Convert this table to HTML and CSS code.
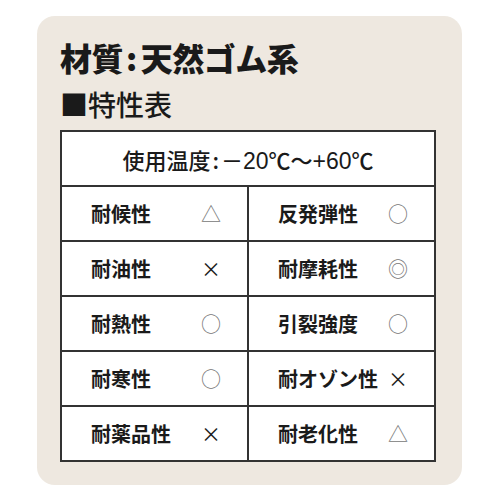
FILE: index.html
```html
<!DOCTYPE html>
<html lang="ja">
<head>
<meta charset="utf-8">
<link rel="stylesheet" href="styles.css">
</head>
<body>
<div class="card">
  <h1 class="title">材質<span class="colon">:</span>天然ゴム系</h1>
  <h2 class="subtitle">■特性表</h2>
  <table class="spec">
    <tr><th colspan="2" class="head">使用温度<span class="hcolon">:</span>－<span class="num">20</span>℃〜<span class="num">+60</span>℃</th></tr>
    <tr>
      <td><div class="cell"><span class="label">耐候性</span><span class="mark">△</span></div></td>
      <td><div class="cell"><span class="label">反発弾性</span><span class="mark">○</span></div></td>
    </tr>
    <tr>
      <td><div class="cell"><span class="label">耐油性</span><span class="mark x">×</span></div></td>
      <td><div class="cell"><span class="label">耐摩耗性</span><span class="mark">◎</span></div></td>
    </tr>
    <tr>
      <td><div class="cell"><span class="label">耐熱性</span><span class="mark">○</span></div></td>
      <td><div class="cell"><span class="label">引裂強度</span><span class="mark">○</span></div></td>
    </tr>
    <tr>
      <td><div class="cell"><span class="label">耐寒性</span><span class="mark">○</span></div></td>
      <td><div class="cell"><span class="label">耐オゾン性</span><span class="mark x">×</span></div></td>
    </tr>
    <tr>
      <td><div class="cell"><span class="label">耐薬品性</span><span class="mark x">×</span></div></td>
      <td><div class="cell"><span class="label">耐老化性</span><span class="mark">△</span></div></td>
    </tr>
  </table>
</div>
</body>
</html>
```
FILE: styles.css
```css
html, body {
  margin: 0;
  padding: 0;
  background: #ffffff;
}
body {
  font-family: "Noto Sans CJK JP", "Noto Sans", sans-serif;
  color: #1a1a1a;
}
.card {
  margin: 16px 0 0 37px;
  width: 425px;
  height: 469px;
  box-sizing: border-box;
  background: #eee8e0;
  border-radius: 18px;
  padding: 22px 26px 0 23px;
}
.title {
  margin: 0;
  font-size: 32px;
  line-height: 38px;
  font-weight: 900;
  letter-spacing: -0.5px;
}
.colon {
  margin: 0 4px 0 3px;
}
.subtitle {
  margin: 10px 0 0 0;
  font-size: 28px;
  line-height: 36px;
  font-weight: 500;
}
.spec {
  margin-top: 8px;
  width: 376px;
  border-collapse: collapse;
  background: #fff;
  border: 2px solid #333;
  table-layout: fixed;
}
.spec th, .spec td {
  border: 2px solid #333;
  height: 53px;
  padding: 0;
}
.head {
  font-size: 22px;
  font-weight: 500;
  text-align: center;
  padding-left: 2px;
}
.hcolon {
  margin: 0 2px;
}
.num {
  font-family: "Liberation Sans", Arial, sans-serif;
  font-weight: 400;
  font-size: 23px;
}
.cell {
  display: grid;
  grid-template-columns: 108px 24px;
  align-items: center;
  padding-left: 29px;
  font-size: 20px;
  font-weight: 700;
}
.label {
  white-space: nowrap;
}
.mark {
  font-weight: 400;
  color: #777;
  text-align: center;
  font-size: 20px;
}
.mark.x {
  color: #1a1a1a;
}
```
